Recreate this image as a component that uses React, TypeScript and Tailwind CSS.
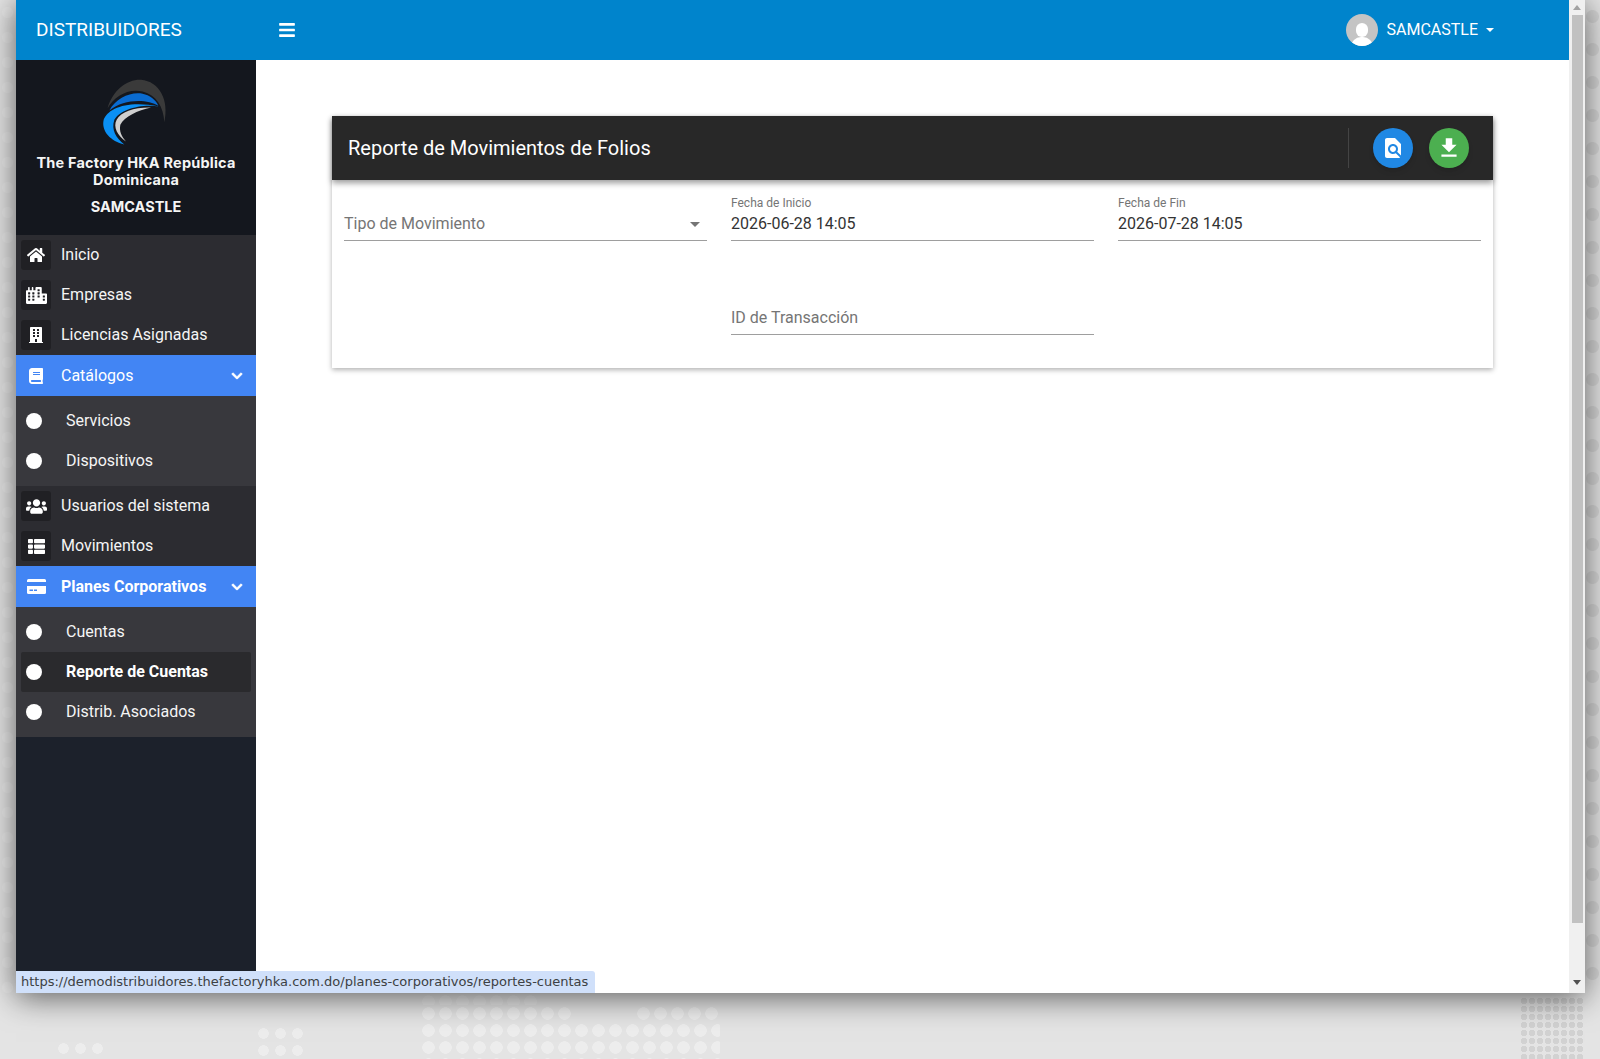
import { FaBars, FaBook, FaBuilding, FaChevronDown, FaCity, FaHome, FaThList, FaUsers } from 'react-icons/fa'
import { MdFileDownload, MdFindInPage } from 'react-icons/md'
import type { ReactNode } from 'react'

function NavRow({ icon, label }: { icon: ReactNode; label: string }) {
  return (
    <div className="flex h-10 items-center pl-[5px]">
      <span className="flex h-[30px] w-[30px] items-center justify-center rounded-[3px] bg-[#202024] text-[18px] text-white">
        {icon}
      </span>
      <span className="ml-[10px] text-base text-[#f5f5f5]">{label}</span>
    </div>
  )
}

function GroupRow({ icon, label, bold }: { icon: ReactNode; label: string; bold?: boolean }) {
  return (
    <div className="flex h-[41px] items-center bg-[#4285f4] pl-[5px] pr-[13px] text-white">
      <span className="flex w-[30px] justify-center text-[18px]">{icon}</span>
      <span className={`ml-[10px] flex-1 text-base ${bold ? 'font-bold' : ''}`}>{label}</span>
      <FaChevronDown className="text-[12px] stroke-[30px]" />
    </div>
  )
}

function SubRow({ label, active }: { label: string; active?: boolean }) {
  return (
    <div className={`mx-[5px] flex h-10 items-center rounded-[2px] ${active ? 'bg-[#2a2a2d]' : ''}`}>
      <span className="ml-[5px] h-4 w-4 rounded-full bg-white" />
      <span className={`ml-6 text-base text-[#f5f5f5] ${active ? 'font-bold text-white' : ''}`}>{label}</span>
    </div>
  )
}

function CardIcon() {
  return (
    <svg width="19" height="15" viewBox="0 0 19 15">
      <path d="M1.5 0h16A1.5 1.5 0 0 1 19 1.5V3H0V1.5A1.5 1.5 0 0 1 1.5 0Z" fill="#fff" />
      <path d="M0 7h19v6.5a1.5 1.5 0 0 1-1.500 1.500h-16A1.500 1.500 0 0 1 0 13.500Z" fill="#fff" />
      <rect x="2.500" y="10.500" width="3.500" height="1.500" fill="#4285f4" />
      <rect x="7" y="10.500" width="3" height="1.500" fill="#4285f4" />
    </svg>
  )
}

function Logo() {
  return (
    <svg width="70" height="67" viewBox="50 25 210 200">
      <path d="M70 115C85 60 130 28 170 30C225 35 255 90 240 157C238 110 215 75 175 65C130 55 90 80 70 115Z" fill="#3a3a3a" />
      <path d="M75 122C95 85 140 65 175 72C195 76 215 90 222 108C190 88 120 85 75 122Z" fill="#0a6bd0" />
      <path d="M120 224C80 215 50 185 58 150C70 115 130 90 225 110C170 100 105 120 90 150C80 180 95 205 120 224Z" fill="#0a90f5" />
      <path d="M125 215C100 200 85 170 97 150C110 125 150 112 200 113C160 122 120 140 108 165C104 185 112 200 125 215Z" fill="#cfcfcf" />
    </svg>
  )
}

function Sidebar() {
  return (
    <aside className="flex w-[240px] shrink-0 flex-col bg-[#1c212b]">
      <div className="flex h-[175px] flex-col items-center bg-[#14171e] pt-[18px] font-['Inter',sans-serif] text-[14.5px] font-bold leading-[17px] text-[#f5f5f5]">
        <Logo />
        <p className="mt-[9px] w-[230px] text-center tracking-[0.2px]">The Factory HKA República Dominicana</p>
        <p className="mt-[10px] text-center">SAMCASTLE</p>
      </div>
      <div className="bg-[#2c2c31]">
        <NavRow icon={<FaHome />} label="Inicio" />
        <NavRow icon={<FaCity className="text-[21px]" />} label="Empresas" />
        <NavRow icon={<FaBuilding className="text-[16px]" />} label="Licencias Asignadas" />
      </div>
      <GroupRow icon={<FaBook className="text-[16px]" />} label="Catálogos" />
      <div className="bg-[#38383d] py-[5px]">
        <SubRow label="Servicios" />
        <SubRow label="Dispositivos" />
      </div>
      <div className="bg-[#2c2c31]">
        <NavRow icon={<FaUsers className="text-[21px]" />} label="Usuarios del sistema" />
        <NavRow icon={<FaThList className="text-[17px]" />} label="Movimientos" />
      </div>
      <GroupRow icon={<CardIcon />} label="Planes Corporativos" bold />
      <div className="bg-[#38383d] py-[5px]">
        <SubRow label="Cuentas" />
        <SubRow label="Reporte de Cuentas" active />
        <SubRow label="Distrib. Asociados" />
      </div>
    </aside>
  )
}

function Field({ label, value, placeholder, caret }: { label?: string; value?: string; placeholder?: string; caret?: boolean }) {
  return (
    <div className="relative h-[53px] border-b border-[#9e9e9e]">
      {label && <div className="absolute left-0 top-2 text-xs leading-[14px] text-[#757575]">{label}</div>}
      <div className={`absolute left-0 top-6 text-base leading-[24px] ${value ? 'text-[#333]' : 'text-[#757575]'}`}>
        {value ?? placeholder}
      </div>
      {caret && (
        <span className="absolute right-[7px] top-[34px] h-0 w-0 border-x-[5px] border-t-[5px] border-x-transparent border-t-[#757575]" />
      )}
    </div>
  )
}

function ReportCard() {
  return (
    <div className="mx-[76px] mt-[56px] w-[1161px] shadow-[0_2px_5px_rgba(0,0,0,0.3)]">
      <div className="relative flex h-16 items-center bg-[#282828] pl-4 pr-6 shadow-[0_3px_6px_rgba(0,0,0,0.4)]">
        <h1 className="flex-1 text-xl font-normal text-white">Reporte de Movimientos de Folios</h1>
        <span className="mr-6 h-10 w-px bg-[#444]" />
        <button className="flex h-10 w-10 items-center justify-center rounded-full bg-[#2088e4] text-[24px] text-white shadow-md">
          <MdFindInPage />
        </button>
        <button className="ml-4 flex h-10 w-10 items-center justify-center rounded-full bg-[#4caf50] text-[26px] text-white shadow-md">
          <MdFileDownload />
        </button>
      </div>
      <div className="grid h-[188px] grid-cols-3 content-start gap-x-6 gap-y-[41px] bg-white px-3 pt-2">
        <Field placeholder="Tipo de Movimiento" caret />
        <Field label="Fecha de Inicio" value="2026-06-28 14:05" />
        <Field label="Fecha de Fin" value="2026-07-28 14:05" />
        <div />
        <Field placeholder="ID de Transacción" />
      </div>
    </div>
  )
}

function Scrollbar() {
  return (
    <div className="flex w-[16px] shrink-0 flex-col items-center bg-[#f0f0f0] pt-[5px]">
      <span className="h-0 w-0 border-x-[4px] border-b-[5px] border-x-transparent border-b-[#a3a3a3]" />
      <span className="mt-[5px] h-[908px] w-[11px] bg-[#c1c1c1]" />
      <span className="mt-[57px] h-0 w-0 border-x-[4px] border-t-[5px] border-x-transparent border-t-[#505050]" />
    </div>
  )
}

export default function App() {
  return (
    <div className="relative h-[1059px] w-[1600px] overflow-hidden bg-[#e4e4e4] font-['Roboto',sans-serif]">
      {/* wallpaper dots */}
      <div className="absolute left-[420px] top-[1022px] h-[37px] w-[300px] bg-[radial-gradient(circle,rgba(255,255,255,0.35)_6px,transparent_6.5px)] bg-[length:17px_17px]" />
      <div className="absolute left-[420px] top-[1005px] h-[17px] w-[153px] bg-[radial-gradient(circle,rgba(255,255,255,0.35)_6px,transparent_6.5px)] bg-[length:17px_17px]" />
      <div className="absolute left-[635px] top-[1005px] h-[17px] w-[85px] bg-[radial-gradient(circle,rgba(255,255,255,0.35)_6px,transparent_6.5px)] bg-[length:17px_17px]" />
      <div className="absolute left-[420px] top-[993px] h-[12px] w-[119px] bg-[radial-gradient(circle,rgba(255,255,255,0.2)_6px,transparent_6.5px)] bg-[length:17px_17px]" />
      <div className="absolute left-[1520px] top-[997px] h-[62px] w-[64px] bg-[radial-gradient(circle,#d2d2d2_3px,transparent_3.5px)] bg-[length:8px_8px]" />
      <div className="absolute left-[55px] top-[1040px] h-[19px] w-[51px] bg-[radial-gradient(circle,rgba(255,255,255,0.35)_5px,transparent_5.5px)] bg-[length:17px_17px]" />
      <div className="absolute left-[255px] top-[1025px] h-[34px] w-[51px] bg-[radial-gradient(circle,rgba(255,255,255,0.35)_5px,transparent_5.5px)] bg-[length:17px_17px]" />
      <div className="absolute left-0 top-0 h-[993px] w-[15px] bg-[radial-gradient(circle,rgba(255,255,255,0.2)_5px,transparent_6px)] bg-[length:15px_25px]" />
      <div className="absolute left-[1585px] top-0 h-[993px] w-[15px] bg-[radial-gradient(circle,#d6d6d6_6px,transparent_7px)] bg-[length:15px_33px]" />

      <div className="relative ml-4 flex h-[993px] w-[1569px] bg-white shadow-[0_4px_30px_rgba(0,0,0,0.6)]">
        <div className="flex min-w-0 flex-1 flex-col">
          <header className="flex h-[60px] shrink-0 items-center bg-[#0084cc] text-white">
            <div className="w-[240px] pl-5 pt-px text-[19px]">DISTRIBUIDORES</div>
            <FaBars className="ml-[22px] text-[18px]" />
            <div className="ml-auto mr-[75px] flex items-center">
              <span className="relative h-8 w-8 overflow-hidden rounded-full bg-[#c4c4c4]">
                <span className="absolute left-[10px] top-[9px] h-[14px] w-3 rounded-full bg-white" />
                <span className="absolute left-[5px] top-[23px] h-5 w-[22px] rounded-full bg-white" />
              </span>
              <span className="ml-2 text-base">SAMCASTLE</span>
              <span className="ml-2 h-0 w-0 border-x-[4px] border-t-[4px] border-x-transparent border-t-white" />
            </div>
          </header>
          <div className="flex min-h-0 flex-1">
            <Sidebar />
            <main className="flex-1 bg-white">
              <ReportCard />
            </main>
          </div>
        </div>
        <Scrollbar />
        <div className="absolute bottom-0 left-0 flex h-[22px] w-[579px] items-center rounded-tr-[3px] bg-[#d0e0fa] pl-[5px] font-['DejaVu_Sans',sans-serif] text-[13px] text-[#3c4043]">
          https://demodistribuidores.thefactoryhka.com.do/planes-corporativos/reportes-cuentas
        </div>
      </div>
    </div>
  )
}
